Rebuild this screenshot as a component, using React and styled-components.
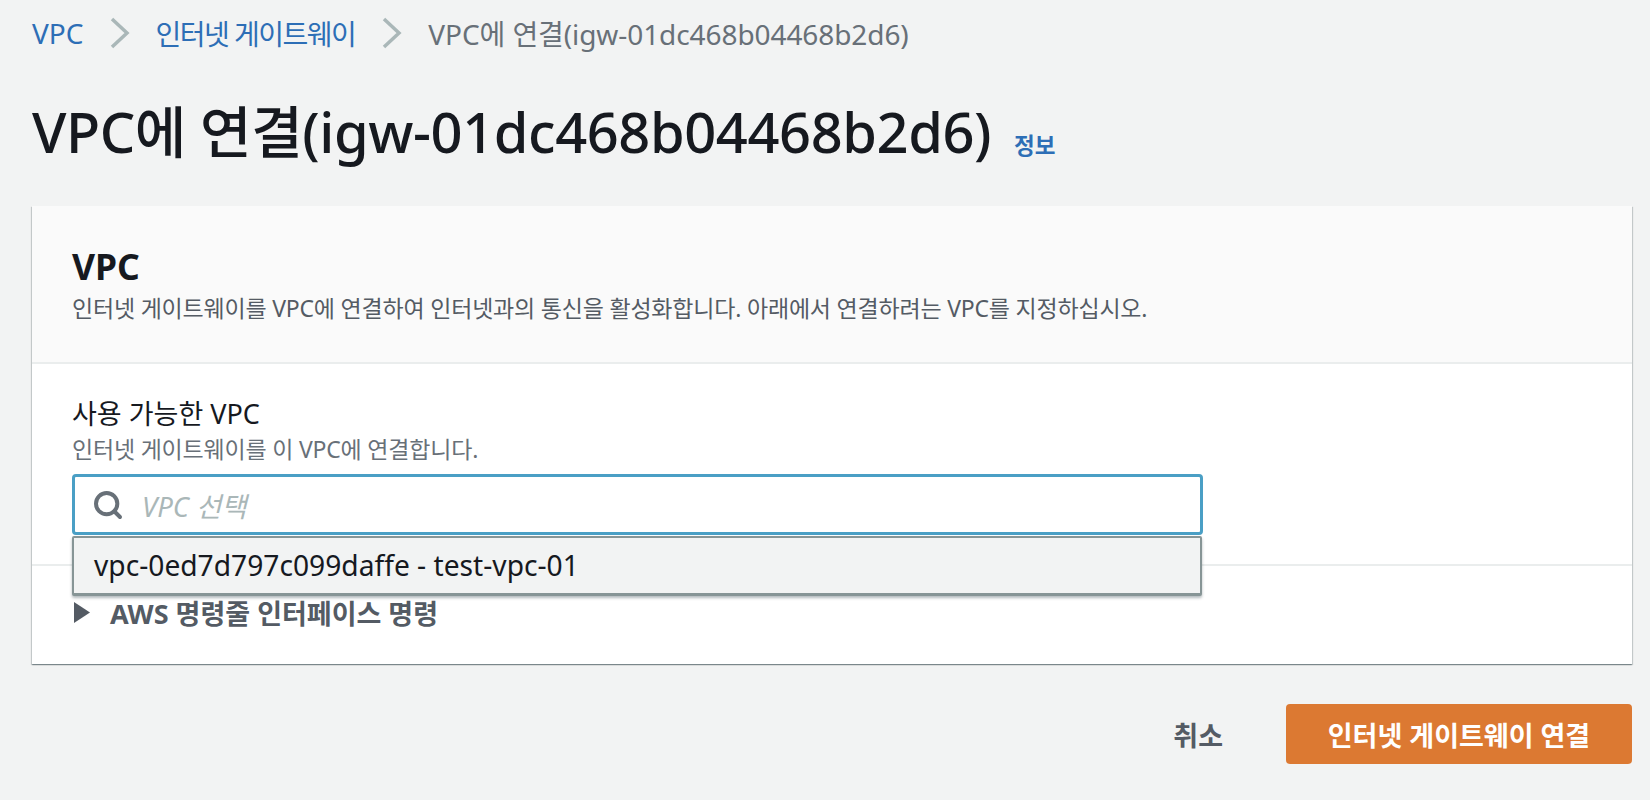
import React from "react";
import styled, { createGlobalStyle } from "styled-components";
import { Search } from "lucide-react";

const Global = createGlobalStyle`
  html, body { margin: 0; padding: 0; background: #f2f3f3; }
  body { font-family: "Noto Sans", "Noto Sans CJK KR", sans-serif; width: 1650px; height: 800px; overflow: hidden; }
`;
const Page = styled.div`
  display: flex; flex-direction: column; padding: 0 18px 0 32px; height: 800px; box-sizing: border-box;
`;
const Breadcrumbs = styled.nav`
  display: flex; align-items: center; height: 66px; font-size: 28px;
`;
const Crumb = styled.span`
  color: ${p => (p.$current ? "#687078" : "#2d6eb6")};
  letter-spacing: ${p => p.$spacing || 0}px;
`;
const Sep = styled.svg`
  width: 22px; height: 32px; margin: 0 ${p => p.$after}px 0 26px; fill: none; stroke: #aab7b8; stroke-width: 3.5;
`;
const TitleRow = styled.div`
  display: flex; align-items: baseline; gap: 23px; margin-top: 29px; height: 111px;
`;
const Title = styled.h1`
  margin: 0; font-size: 56px; line-height: 72px; font-weight: 500; color: #16191f; letter-spacing: -0.43px;
`;
const Info = styled.span`
  font-size: 22.5px; font-weight: 600; color: #2d6eb6; position: relative; top: 1px;
`;
const Card = styled.section`
  background: #fff; height: 458px; display: flex; flex-direction: column;
  box-shadow: 0 1px 1px 0 rgba(0, 28, 36, 0.3), 1px 1px 1px 0 rgba(0, 28, 36, 0.15), -1px 1px 1px 0 rgba(0, 28, 36, 0.15);
`;
const CardHeader = styled.header`
  background: #fafafa; border-bottom: 2px solid #eaeded; padding: 37px 40px 0; height: 158px; box-sizing: border-box;
`;
const CardTitle = styled.h2`
  margin: 0; font-size: 35.5px; line-height: 46px; font-weight: 700; color: #16191f;
`;
const CardDesc = styled.p`
  margin: 4px 0 0; font-size: 23px; line-height: 30px; color: #545b64; letter-spacing: -0.2px;
`;
const CardBody = styled.div`
  padding: 33px 40px 0; height: 202px; box-sizing: border-box; border-bottom: 2px solid #eaeded; position: relative;
`;
const Label = styled.div`
  font-size: 27px; line-height: 34px; color: #16191f;
`;
const Hint = styled.div`
  font-size: 23px; line-height: 30px; color: #687078; letter-spacing: -0.2px; margin-top: 3px;
`;
const InputBox = styled.div`
  display: flex; align-items: center; gap: 18px; box-sizing: border-box; width: 1131px; height: 61px; margin-top: 10px;
  padding: 0 17px; background: #fff; border: 3px solid #4a9fc5; border-radius: 4px; color: #687078;
`;
const Placeholder = styled.span`
  font-size: 27.5px; font-style: italic; color: #aab7b8;
`;
const Menu = styled.div`
  position: absolute; left: 40px; top: 172px; width: 1130px; height: 60px; box-sizing: border-box; z-index: 2;
  display: flex; align-items: center; padding: 0 20px 2px; background: #f2f3f3; border: 2px solid #879596; border-radius: 2px;
  border-bottom-width: 3px; font-size: 28.2px; color: #16191f; box-shadow: 0 2px 3px rgba(0, 28, 36, 0.3);
`;
const Expander = styled.div`
  display: flex; align-items: center; gap: 20px; padding: 27px 0 0 42px; font-size: 27px; font-weight: 700; color: #545b64;
`;
const Caret = styled.svg`
  width: 16px; height: 21px; fill: #545b64;
`;
const Actions = styled.div`
  display: flex; justify-content: flex-end; align-items: center; margin-top: 40px;
`;
const Cancel = styled.button`
  border: 0; background: transparent; font: inherit; font-size: 27px; font-weight: 700; color: #545b64; padding: 0; margin-right: 63px;
`;
const Primary = styled.button`
  border: 0; background: #dc7932; color: #fff; font: inherit; font-size: 27px; font-weight: 700; width: 346px; height: 60px; border-radius: 4px;
`;

export default function App() {
  return (
    <>
      <Global />
      <Page>
        <Breadcrumbs>
          <Crumb>VPC</Crumb>
          <Sep $after={24} viewBox="0 0 22 32"><path d="M3 2l15 14L3 30" /></Sep>
          <Crumb $spacing={-1.5}>인터넷 게이트웨이</Crumb>
          <Sep $after={25} viewBox="0 0 22 32"><path d="M3 2l15 14L3 30" /></Sep>
          <Crumb $current $spacing={-0.08}>VPC에 연결(igw-01dc468b04468b2d6)</Crumb>
        </Breadcrumbs>
        <TitleRow>
          <Title>VPC에 연결(igw-01dc468b04468b2d6)</Title>
          <Info>정보</Info>
        </TitleRow>
        <Card>
          <CardHeader>
            <CardTitle>VPC</CardTitle>
            <CardDesc>인터넷 게이트웨이를 VPC에 연결하여 인터넷과의 통신을 활성화합니다. 아래에서 연결하려는 VPC를 지정하십시오.</CardDesc>
          </CardHeader>
          <CardBody>
            <Label>사용 가능한 VPC</Label>
            <Hint>인터넷 게이트웨이를 이 VPC에 연결합니다.</Hint>
            <InputBox>
              <Search size={32} strokeWidth={3} />
              <Placeholder>VPC 선택</Placeholder>
            </InputBox>
            <Menu>vpc-0ed7d797c099daffe - test-vpc-01</Menu>
          </CardBody>
          <Expander>
            <Caret viewBox="0 0 16 21"><path d="M0 0l16 10.5L0 21z" /></Caret>
            AWS 명령줄 인터페이스 명령
          </Expander>
        </Card>
        <Actions>
          <Cancel>취소</Cancel>
          <Primary>인터넷 게이트웨이 연결</Primary>
        </Actions>
      </Page>
    </>
  );
}
